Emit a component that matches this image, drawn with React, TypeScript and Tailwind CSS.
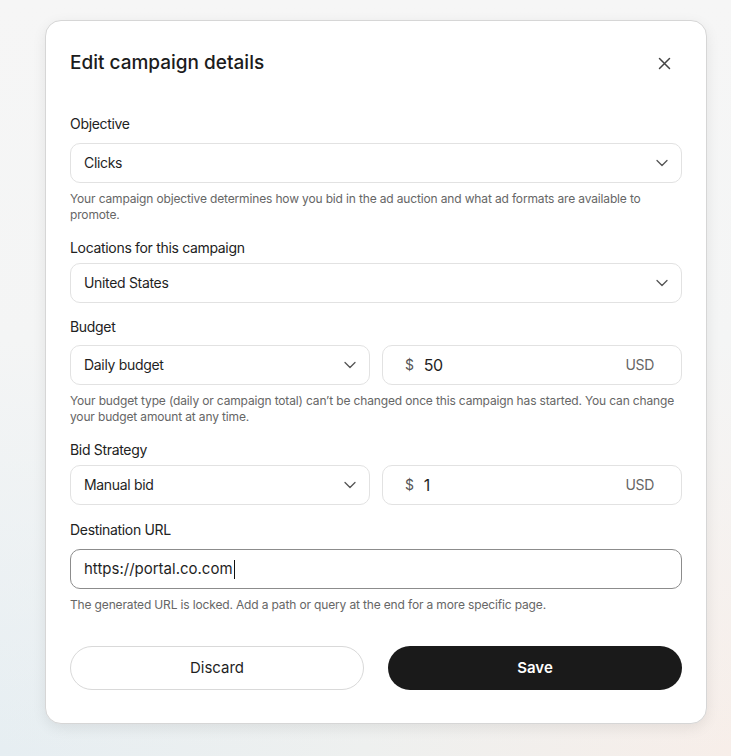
import React from 'react';

function Chevron() {
  return (
    <svg width="12" height="8" viewBox="0 0 12 8" fill="none" className="text-[#555]">
      <path d="M1 1.5l5 5 5-5" stroke="currentColor" strokeWidth="1.3" strokeLinecap="round" strokeLinejoin="round" />
    </svg>
  );
}

function Close() {
  return (
    <svg width="13" height="13" viewBox="0 0 13 13" fill="none" className="text-[#444]">
      <path d="M1.5 1.5l10 10M11.5 1.5l-10 10" stroke="currentColor" strokeWidth="1.5" strokeLinecap="round" />
    </svg>
  );
}

function SelectBox({ value }: { value: string }) {
  return (
    <div className="flex h-10 items-center justify-between rounded-[10px] border border-[#e2e2e2] bg-white pl-[13px] pr-[13px] text-sm text-[#1f1f1f]">
      <span>{value}</span>
      <Chevron />
    </div>
  );
}

function MoneyBox({ value }: { value: string }) {
  return (
    <div className="flex h-10 items-center rounded-[10px] border border-[#e2e2e2] bg-white pl-[22px] pr-[27px] text-sm">
      <span className="text-[#555]">$</span>
      <span className="ml-[10px] flex-1 text-base text-[#1f1f1f]">{value}</span>
      <span className="text-[#666]">USD</span>
    </div>
  );
}

function Help({ children }: { children: React.ReactNode }) {
  return <p className="mt-2 text-xs leading-4 tracking-[-0.15px] text-[#666]">{children}</p>;
}

export default function App() {
  return (
    <div
      className="min-h-[756px] w-full bg-[linear-gradient(to_bottom,#f6f6f6_0%,#f4f5f5_45%,transparent_100%),linear-gradient(to_right,#e6eef2_0%,#eef0ef_50%,#f7eee9_100%)] px-[45px] pt-5 tracking-[-0.02em]"
      style={{ fontFamily: 'Inter, "Liberation Sans", sans-serif' }}
    >
      <div className="w-[662px] rounded-2xl border border-[#d6d6d6] bg-white px-6 pt-6 pb-[33px] shadow-[0_4px_14px_rgba(0,0,0,0.08)]">
        <div className="flex h-9 items-center justify-between">
          <h1 className="text-[19px] font-medium tracking-normal text-[#1c1c1c]">Edit campaign details</h1>
          <button className="mr-[6px] flex h-6 w-6 items-center justify-center">
            <Close />
          </button>
        </div>

        <label className="mt-[33px] mb-[9px] block text-sm leading-5 text-[#222]">Objective</label>
        <SelectBox value="Clicks" />
        <Help>
          Your campaign objective determines how you bid in the ad auction and what ad formats are available to promote.
        </Help>

        <label className="mt-[15px] mb-[5px] block text-sm leading-5 text-[#222]">Locations for this campaign</label>
        <SelectBox value="United States" />

        <label className="mt-[14px] mb-2 block text-sm leading-5 text-[#222]">Budget</label>
        <div className="grid grid-cols-2 gap-3">
          <SelectBox value="Daily budget" />
          <MoneyBox value="50" />
        </div>
        <Help>
          Your budget type (daily or campaign total) can’t be changed once this campaign has started. You can change your budget amount at any time.
        </Help>

        <label className="mt-[15px] mb-[5px] block text-sm leading-5 text-[#222]">Bid Strategy</label>
        <div className="grid grid-cols-2 gap-3">
          <SelectBox value="Manual bid" />
          <MoneyBox value="1" />
        </div>

        <label className="mt-[15px] mb-[9px] block text-sm leading-5 text-[#222]">Destination URL</label>
        <div className="flex h-10 items-center rounded-[10px] border border-[#8c8c8c] bg-white pl-[13px] text-[15px] tracking-normal text-[#1f1f1f]">
          <span>https://portal.co.com</span>
          <span className="ml-px h-[19px] w-px bg-[#111]" />
        </div>
        <Help>The generated URL is locked. Add a path or query at the end for a more specific page.</Help>

        <div className="mt-[33px] grid grid-cols-2 gap-6 tracking-normal">
          <button className="h-11 rounded-full border border-[#d9d9d9] bg-white text-[15px] text-[#1f1f1f]">Discard</button>
          <button className="h-11 rounded-full bg-[#1a1a1a] text-[15px] font-semibold text-white">Save</button>
        </div>
      </div>
    </div>
  );
}
